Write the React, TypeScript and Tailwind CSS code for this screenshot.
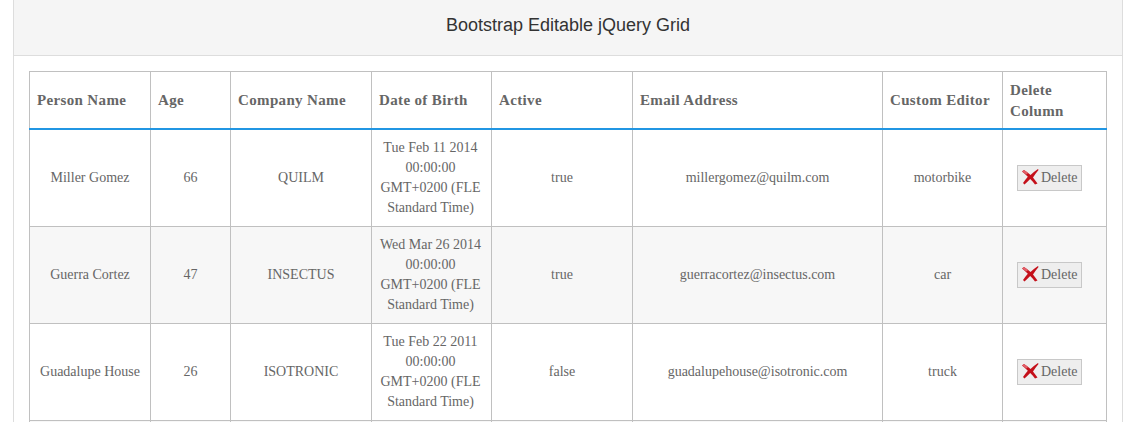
const people = [
  { name: 'Miller Gomez', age: 66, company: 'QUILM', dob: 'Tue Feb 11 2014 00:00:00 GMT+0200 (FLE Standard Time)', active: 'true', email: 'millergomez@quilm.com', editor: 'motorbike' },
  { name: 'Guerra Cortez', age: 47, company: 'INSECTUS', dob: 'Wed Mar 26 2014 00:00:00 GMT+0200 (FLE Standard Time)', active: 'true', email: 'guerracortez@insectus.com', editor: 'car' },
  { name: 'Guadalupe House', age: 26, company: 'ISOTRONIC', dob: 'Tue Feb 22 2011 00:00:00 GMT+0200 (FLE Standard Time)', active: 'false', email: 'guadalupehouse@isotronic.com', editor: 'truck' },
]

const columns = [
  { title: 'Person Name', width: 'w-[121px]' },
  { title: 'Age', width: 'w-[80px]' },
  { title: 'Company Name', width: 'w-[141px]' },
  { title: 'Date of Birth', width: 'w-[120px]' },
  { title: 'Active', width: 'w-[141px]' },
  { title: 'Email Address', width: 'w-[250px]' },
  { title: 'Custom Editor', width: 'w-[120px]' },
  { title: 'Delete Column', width: 'w-[104px]' },
]

function rowClass(i: number) {
  if (i === 0) return 'h-[98px] bg-white'
  return i % 2 === 1 ? 'h-[97px] bg-[#f7f7f7]' : 'h-[97px] bg-white'
}

function DeleteIcon() {
  return (
    <svg width="18" height="18" viewBox="0 0 18 18" className="mb-[2px] shrink-0">
      <path d="M1 3.500 L3 2 C5.500 3.500 7.800 5.500 9.500 7 C11.500 5 14 3 17 1 L17.500 2 C15.500 4.500 13.500 7 12 9.500 C13.500 11.500 15 13.500 16.500 15.500 L14 16.500 C12.500 14.500 10.800 12.500 9.200 11 C7.500 12.800 5.500 14.800 3.500 16.500 L2 15 C3.500 13 5.200 10.800 6.800 8.800 C5 6.800 3 5 1 3.500 Z" fill="#c4101a" />
      <path d="M1 3.500 L3 2 C4.500 3 5.800 4 7 5 L5.500 6.500 C4 5.500 2.500 4.500 1 3.500 Z" fill="#e2606a" />
    </svg>
  )
}

export default function App() {
  return (
    <div className="h-[422px] overflow-hidden bg-white px-[13px] font-['Liberation_Serif',serif] text-[14px] leading-[20px] text-[#666]">
      <div className="h-[440px] w-[1110px] border-x border-[#ddd]">
        <div className="flex h-[56px] items-center justify-center border-b border-[#ddd] bg-[#f5f5f5] pb-[6px] font-['Liberation_Sans',sans-serif] text-[18px] text-[#333]">
          Bootstrap Editable jQuery Grid
        </div>
        <div className="px-[15px] pt-[15px]">
          <table className="w-[1078px] table-fixed border-collapse">
            <thead>
              <tr className="h-[57px]">
                {columns.map((c) => (
                  <th key={c.title} className={`${c.width} border-x border-t border-b-2 border-[#c0c0c0] border-b-[#2196e3] px-[7px] pt-[2px] text-left text-[15px] leading-[21px] font-bold tracking-[0.35px]`}>
                    {c.title}
                  </th>
                ))}
              </tr>
            </thead>
            <tbody>
              {people.map((p, i) => (
                <tr key={p.name} className={rowClass(i)}>
                  <td className="border border-[#c0c0c0] px-[7px] text-center">{p.name}</td>
                  <td className="border border-[#c0c0c0] px-[7px] text-center">{p.age}</td>
                  <td className="border border-[#c0c0c0] px-[7px] text-center">{p.company}</td>
                  <td className="border border-[#c0c0c0] pr-[8px] pl-[6px] text-center">{p.dob}</td>
                  <td className="border border-[#c0c0c0] px-[7px] text-center">{p.active}</td>
                  <td className="border border-[#c0c0c0] px-[7px] text-center">{p.email}</td>
                  <td className="border border-[#c0c0c0] px-[7px] text-center">{p.editor}</td>
                  <td className="border border-[#c0c0c0] px-[14px]">
                    <button className="flex h-[26px] w-[65px] items-center gap-[2px] border border-[#c8c8c8] bg-[#eee] pl-[3px] text-[14px] text-[#666]">
                      <DeleteIcon />
                      Delete
                    </button>
                  </td>
                </tr>
              ))}
              {/* next row starts right at the bottom edge of the shot */}
              <tr className="h-[20px] bg-[#f7f7f7]">
                {columns.map((c) => (
                  <td key={c.title} className="border border-[#c0c0c0]" />
                ))}
              </tr>
            </tbody>
          </table>
        </div>
      </div>
    </div>
  )
}
